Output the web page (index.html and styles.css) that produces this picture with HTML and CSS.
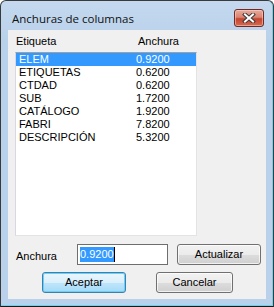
FILE: index.html
```html
<!DOCTYPE html>
<html lang="es">
<head>
    <meta charset="UTF-8" />
    <title>Anchuras de columnas</title>
    <link rel="stylesheet" href="styles.css">
</head>
<body>
    <div class="window">
        <div class="titlebar">
            <span class="title">Anchuras de columnas</span>
            <div class="close-btn">
                <svg width="14" height="10" viewBox="0 0 14 10">
                    <path d="M3 1.5 L11 8.5 M11 1.5 L3 8.5" stroke="#3b3b3b" stroke-width="4" stroke-linecap="square"/>
                    <path d="M3 1.5 L11 8.5 M11 1.5 L3 8.5" stroke="#ffffff" stroke-width="2" stroke-linecap="square"/>
                </svg>
            </div>
        </div>
        <div class="client">
            <div class="col-headers">
                <span class="col-name">Etiqueta</span>
                <span class="col-width">Anchura</span>
            </div>
            <div class="listbox">
                <div class="row selected"><span class="cell-name">ELEM</span><span>0.9200</span></div>
                <div class="row"><span class="cell-name">ETIQUETAS</span><span>0.6200</span></div>
                <div class="row"><span class="cell-name">CTDAD</span><span>0.6200</span></div>
                <div class="row"><span class="cell-name">SUB</span><span>1.7200</span></div>
                <div class="row"><span class="cell-name">CATÁLOGO</span><span>1.9200</span></div>
                <div class="row"><span class="cell-name">FABRI</span><span>7.8200</span></div>
                <div class="row"><span class="cell-name">DESCRIPCIÓN</span><span>5.3200</span></div>
            </div>
            <div class="edit-row">
                <span class="edit-label">Anchura</span>
                <div class="textbox"><span class="sel-text">0.9200</span><span class="caret"></span></div>
                <div class="btn btn-update">Actualizar</div>
            </div>
            <div class="action-row">
                <div class="btn btn-default">Aceptar</div>
                <div class="btn btn-cancel">Cancelar</div>
            </div>
        </div>
    </div>
</body>
</html>
```

FILE: styles.css
```css
body {
    margin: 0;
    padding: 0;
    font-family: "Liberation Sans", Arial, sans-serif;
    font-size: 11px;
    color: #000;
    background: #ffffff;
}

.window {
    width: 274px;
    height: 307px;
    box-sizing: border-box;
    border: 1px solid #3a3a3a;
    border-bottom-color: #1a1a1a;
    border-radius: 6px 6px 0 0;
    background: linear-gradient(#c4d9ef, #b9d1ea 40px);
    box-shadow: inset 0 -1px 0 #6fd0ee, inset -1px 0 0 #6fd0ee;
}

.titlebar {
    height: 29px;
    display: flex;
    justify-content: space-between;
    padding: 0 9px 0 11px;
}

.title {
    font-family: "Open Sans", "Noto Sans", sans-serif;
    font-size: 11.5px;
    line-height: 16px;
    padding-top: 10px;
    color: #101010;
}

.close-btn {
    margin-top: 8px;
    width: 30px;
    height: 18px;
    box-sizing: border-box;
    border: 1px solid #6e2a24;
    border-radius: 3px;
    background: linear-gradient(#e9a99c, #d98472 45%, #c5452f 55%, #d66a4f);
    box-shadow: inset 0 0 0 1px rgba(255, 220, 210, 0.5);
    display: flex;
    align-items: center;
    justify-content: center;
}

.client {
    margin: 0 7px;
    height: 269px;
    background: #f0f0f0;
    padding-left: 7px;
    box-sizing: border-box;
}

.col-headers {
    display: flex;
    height: 22px;
    padding: 5px 0 0 1px;
    box-sizing: border-box;
    line-height: 13px;
}

.col-name {
    width: 122px;
}

.listbox {
    width: 182px;
    height: 184px;
    box-sizing: border-box;
    background: #fff;
    border: 1px solid;
    border-color: #a0a0a0 #e3e3e3 #e3e3e3 #d8d8e2;
}

.row {
    display: flex;
    height: 13px;
    line-height: 13px;
    padding-left: 3px;
}

.row.selected {
    background: #3399ff;
    color: #fff;
}

.cell-name {
    width: 117px;
}

.edit-row {
    display: flex;
    align-items: center;
    margin-top: 8px;
    height: 21px;
}

.edit-label {
    width: 61px;
    padding-left: 1px;
    padding-top: 2px;
}

.textbox {
    width: 91px;
    height: 21px;
    box-sizing: border-box;
    border: 1px solid #6e6e6e;
    background: #fff;
    display: flex;
    align-items: center;
    padding-left: 2px;
}

.sel-text {
    background: #3399ff;
    color: #fff;
    line-height: 15px;
}

.caret {
    width: 1px;
    height: 15px;
    background: #000;
}

.btn {
    height: 21px;
    box-sizing: border-box;
    border: 1px solid #707070;
    border-radius: 3px;
    background: linear-gradient(#f2f2f2, #ebebeb 50%, #dddddd 50%, #cfcfcf);
    box-shadow: inset 0 0 0 1px rgba(255, 255, 255, 0.7);
    display: flex;
    align-items: center;
    justify-content: center;
    line-height: 13px;
}

.btn-update {
    width: 84px;
    margin-left: 9px;
}

.action-row {
    display: flex;
    margin-top: 7px;
    padding-left: 27px;
}

.btn-default {
    width: 84px;
    border-color: #3c7fb1;
    background: linear-gradient(#eaf6fd, #d9f0fc 50%, #bee6fd 50%, #a7d9f5);
    box-shadow: inset 0 0 0 1px #6ad0f5;
}

.btn-cancel {
    width: 77px;
    margin-left: 30px;
}
```
